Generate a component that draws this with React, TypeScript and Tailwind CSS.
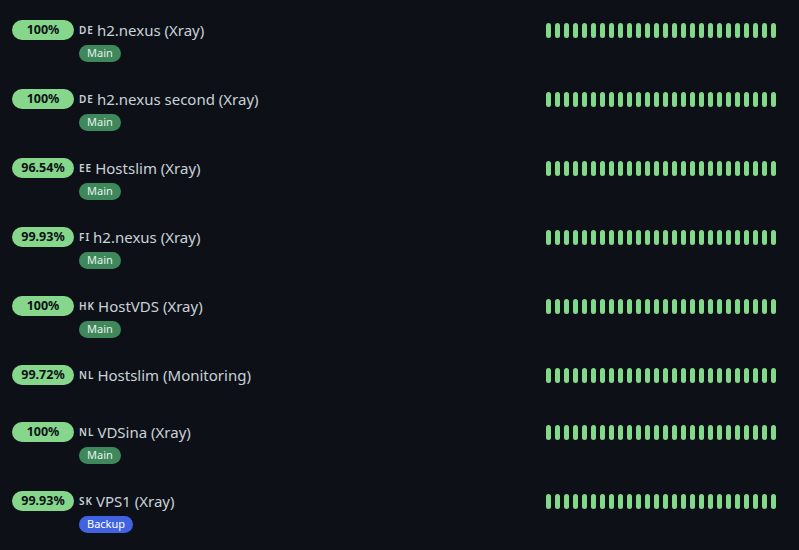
const servers = [
  { uptime: "100%", flag: "DE", name: "h2.nexus (Xray)", tag: "Main" },
  { uptime: "100%", flag: "DE", name: "h2.nexus second (Xray)", tag: "Main" },
  { uptime: "96.54%", flag: "EE", name: "Hostslim (Xray)", tag: "Main" },
  { uptime: "99.93%", flag: "FI", name: "h2.nexus (Xray)", tag: "Main" },
  { uptime: "100%", flag: "HK", name: "HostVDS (Xray)", tag: "Main" },
  { uptime: "99.72%", flag: "NL", name: "Hostslim (Monitoring)", tag: "" },
  { uptime: "100%", flag: "NL", name: "VDSina (Xray)", tag: "Main" },
  { uptime: "99.93%", flag: "SK", name: "VPS1 (Xray)", tag: "Backup" },
];

const beats = Array.from({ length: 26 }, (_, i) => i);

export default function App() {
  return (
    <div
      className="min-h-screen bg-[#0d1117] pt-5 pl-3 pr-[23px]"
      style={{ fontFamily: '"Noto Sans", "Open Sans", sans-serif' }}
    >
      <div className="flex flex-col gap-[27px]">
        {servers.map((s, idx) => (
          <div key={idx} className="flex justify-between items-start min-h-[30px]">
            {/* LEFT */}
            <div className="flex items-start gap-[5px]">
              <div className="w-[62px] h-5 rounded-full bg-[#86d78c] text-[#0d1117] text-[12.5px] font-bold flex items-center justify-center">
                {s.uptime}
              </div>
              <div className="flex flex-col items-start">
                <div className="h-5 flex items-center gap-[3px] text-[#c9d1d9]">
                  <span className="text-[10px] font-semibold tracking-[1px]">{s.flag}</span>
                  <span className="text-[15px] leading-5">{s.name}</span>
                </div>
                {s.tag && (
                  <div
                    className={
                      s.tag === "Main"
                        ? "mt-[5px] flex items-center h-[17px] px-2 rounded-full bg-[#3e885b] text-[#e6f2ea] text-[11px]"
                        : "mt-[5px] flex items-center h-[17px] px-2 rounded-full bg-[#4163e2] text-white text-[11px]"
                    }
                  >
                    {s.tag}
                  </div>
                )}
              </div>
            </div>

            {/* HEARTBEAT BARS */}
            <div className="flex gap-1 mt-[3px]">
              {beats.map((b) => (
                <div key={b} className="w-[5px] h-[15px] rounded-full bg-[#82d98a]" />
              ))}
            </div>
          </div>
        ))}
      </div>
    </div>
  );
}
